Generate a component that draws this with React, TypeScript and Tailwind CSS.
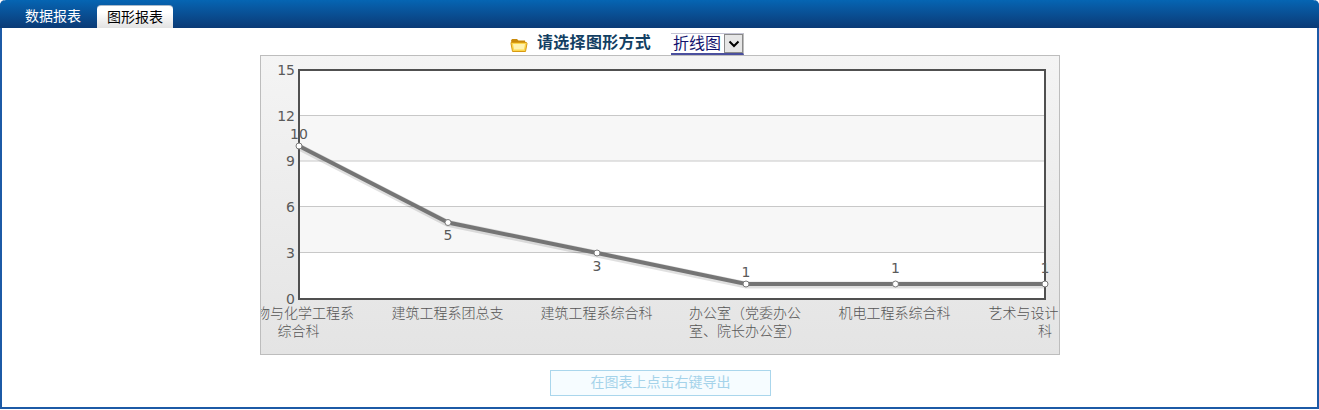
const FONT = "font-['Liberation_Sans','Noto_Sans_CJK_SC',sans-serif]";

const yTicks = [
  { label: "15", y: 70 },
  { label: "12", y: 115.5 },
  { label: "9", y: 161 },
  { label: "6", y: 206.5 },
  { label: "3", y: 252.5 },
  { label: "0", y: 299 },
];

const points = [
  { x: 299, y: 146, value: "10", vx: 299, vy: 139 },
  { x: 448, y: 222.5, value: "5", vx: 448, vy: 240 },
  { x: 597, y: 253, value: "3", vx: 597, vy: 271 },
  { x: 746, y: 284, value: "1", vx: 746, vy: 277 },
  { x: 895.5, y: 284, value: "1", vx: 895.5, vy: 273 },
  { x: 1045, y: 284, value: "1", vx: 1045, vy: 273 },
];

const xLabels = [
  { text: "物与化学工程系", x: 354, y: 318, anchor: "end" },
  { text: "综合科", x: 298.5, y: 336, anchor: "middle" },
  { text: "建筑工程系团总支", x: 447.5, y: 318, anchor: "middle" },
  { text: "建筑工程系综合科", x: 596.5, y: 318, anchor: "middle" },
  { text: "办公室（党委办公", x: 745, y: 318, anchor: "middle" },
  { text: "室、院长办公室）", x: 745, y: 336, anchor: "middle" },
  { text: "机电工程系综合科", x: 894.5, y: 318, anchor: "middle" },
  { text: "艺术与设计", x: 1058.5, y: 318, anchor: "end" },
  { text: "科", x: 1045, y: 336, anchor: "middle" },
];

function FolderIcon() {
  return (
    <svg width="18" height="16" viewBox="0 0 18 16">
      <path d="M1 3.5 L2 2 H7 L8.5 3.5 H15 L15.5 6 H1.5 Z" fill="#c98a0a" />
      <path
        d="M1 5.5 H16.5 L17 6.5 L15.5 14.5 H2.5 L1 6.5 Z"
        fill="#fcd64c"
        stroke="#d89a12"
        strokeWidth="1"
      />
      <path d="M3 7 H15 L14 12.5 H4 Z" fill="#fff3b0" />
    </svg>
  );
}

function LineChart() {
  const line = points.map((p) => `${p.x},${p.y}`).join(" ");
  return (
    <svg viewBox="261 56 798 298" className="block w-[798px] h-[298px] overflow-hidden">
      <rect x="299" y="70" width="746" height="229" fill="#ffffff" />
      <rect x="299" y="115.5" width="746" height="45.5" fill="#f7f7f7" />
      <rect x="299" y="206.5" width="746" height="46" fill="#f7f7f7" />
      {yTicks.slice(1, 5).map((t) => (
        <line key={t.label} x1="299" x2="1045" y1={t.y} y2={t.y} stroke="#c8c8c8" strokeWidth="1" />
      ))}
      <polyline points={line} transform="translate(0 1)" fill="none" stroke="#000000" strokeOpacity="0.12" strokeWidth="7" />
      <rect x="299" y="70" width="746" height="229" fill="none" stroke="#505050" strokeWidth="2" />
      <polyline points={line} fill="none" stroke="#757575" strokeWidth="4" />
      {points.map((p) => (
        <circle key={p.x} cx={p.x} cy={p.y} r="3" fill="#ffffff" stroke="#7a7a7a" strokeWidth="1" />
      ))}
      <g fontFamily="'DejaVu Sans', sans-serif" fontSize="14" fill="#5a5a5a">
        {yTicks.map((t) => (
          <text key={t.label} x="295" y={t.y + 5} textAnchor="end">
            {t.label}
          </text>
        ))}
        {points.map((p) => (
          <text key={p.x} x={p.vx} y={p.vy} textAnchor="middle">
            {p.value}
          </text>
        ))}
      </g>
      <g fontFamily="'Noto Sans CJK SC', sans-serif" fontSize="14" fontWeight="300" fill="#555555">
        {xLabels.map((l) => (
          <text key={l.text} x={l.x} y={l.y} textAnchor={l.anchor as "end" | "middle"}>
            {l.text}
          </text>
        ))}
      </g>
    </svg>
  );
}

export default function App() {
  return (
    <div className={`${FONT} w-[1319px] h-[410px] bg-white overflow-hidden`}>
      <div className="h-[409px] flex flex-col border-x-2 border-b-2 border-[#1c5aa6] rounded-t-[5px]">
        <div className="h-[28px] -mx-[2px] flex items-end rounded-t-[6px] bg-gradient-to-b from-[#0565b3] to-[#0a3a76] pl-[15px]">
          <div className="w-[76px] h-[23px] flex items-center justify-center text-[14px] text-white">
            数据报表
          </div>
          <div className="ml-[6px] w-[76px] h-[23px] flex items-center justify-center rounded-t-[4px] border-t border-[#a9b9c9] bg-gradient-to-b from-white from-30% to-[#e2e2e2] text-[14px] text-black">
            图形报表
          </div>
        </div>

        <div className="h-[27px] flex items-start pl-[508px]">
          <div className="mt-[9px]">
            <FolderIcon />
          </div>
          <span className="ml-[9px] mt-[7px] text-[16px] leading-none font-bold tracking-[0.3px] text-[#133f63]">
            请选择图形方式
          </span>
          <div className="ml-[20px] mt-[5px] w-[73px] h-[22px] flex items-stretch border-b-2 border-b-[#4a4f9e] border-t border-t-[#c4c4d4] border-r border-r-[#bdbdbd] bg-white">
            <span className="flex-1 flex items-center pl-[2px] text-[16px] leading-none text-[#14146e]">
              折线图
            </span>
            <span className="w-[19px] flex items-center justify-center bg-[#e6e6e6] border border-[#8a8a8a]">
              <svg width="12" height="8" viewBox="0 0 12 8">
                <path d="M1.5 1.5 L6 6 L10.5 1.5" fill="none" stroke="#000000" strokeWidth="2" />
              </svg>
            </span>
          </div>
        </div>

        <div className="ml-[258px] w-[800px] h-[300px] border border-[#bdbdbd] bg-gradient-to-b from-[#f4f4f4] to-[#e4e4e4]">
          <LineChart />
        </div>

        <div className="mt-[15px] pl-[548px]">
          <button
            type="button"
            disabled
            className="block w-[221px] h-[26px] pb-[3px] border border-[#aad6ec] bg-[#f6fcff] text-[14px] leading-none text-[#a5d3ea]"
          >
            在图表上点击右键导出
          </button>
        </div>
      </div>
    </div>
  );
}
